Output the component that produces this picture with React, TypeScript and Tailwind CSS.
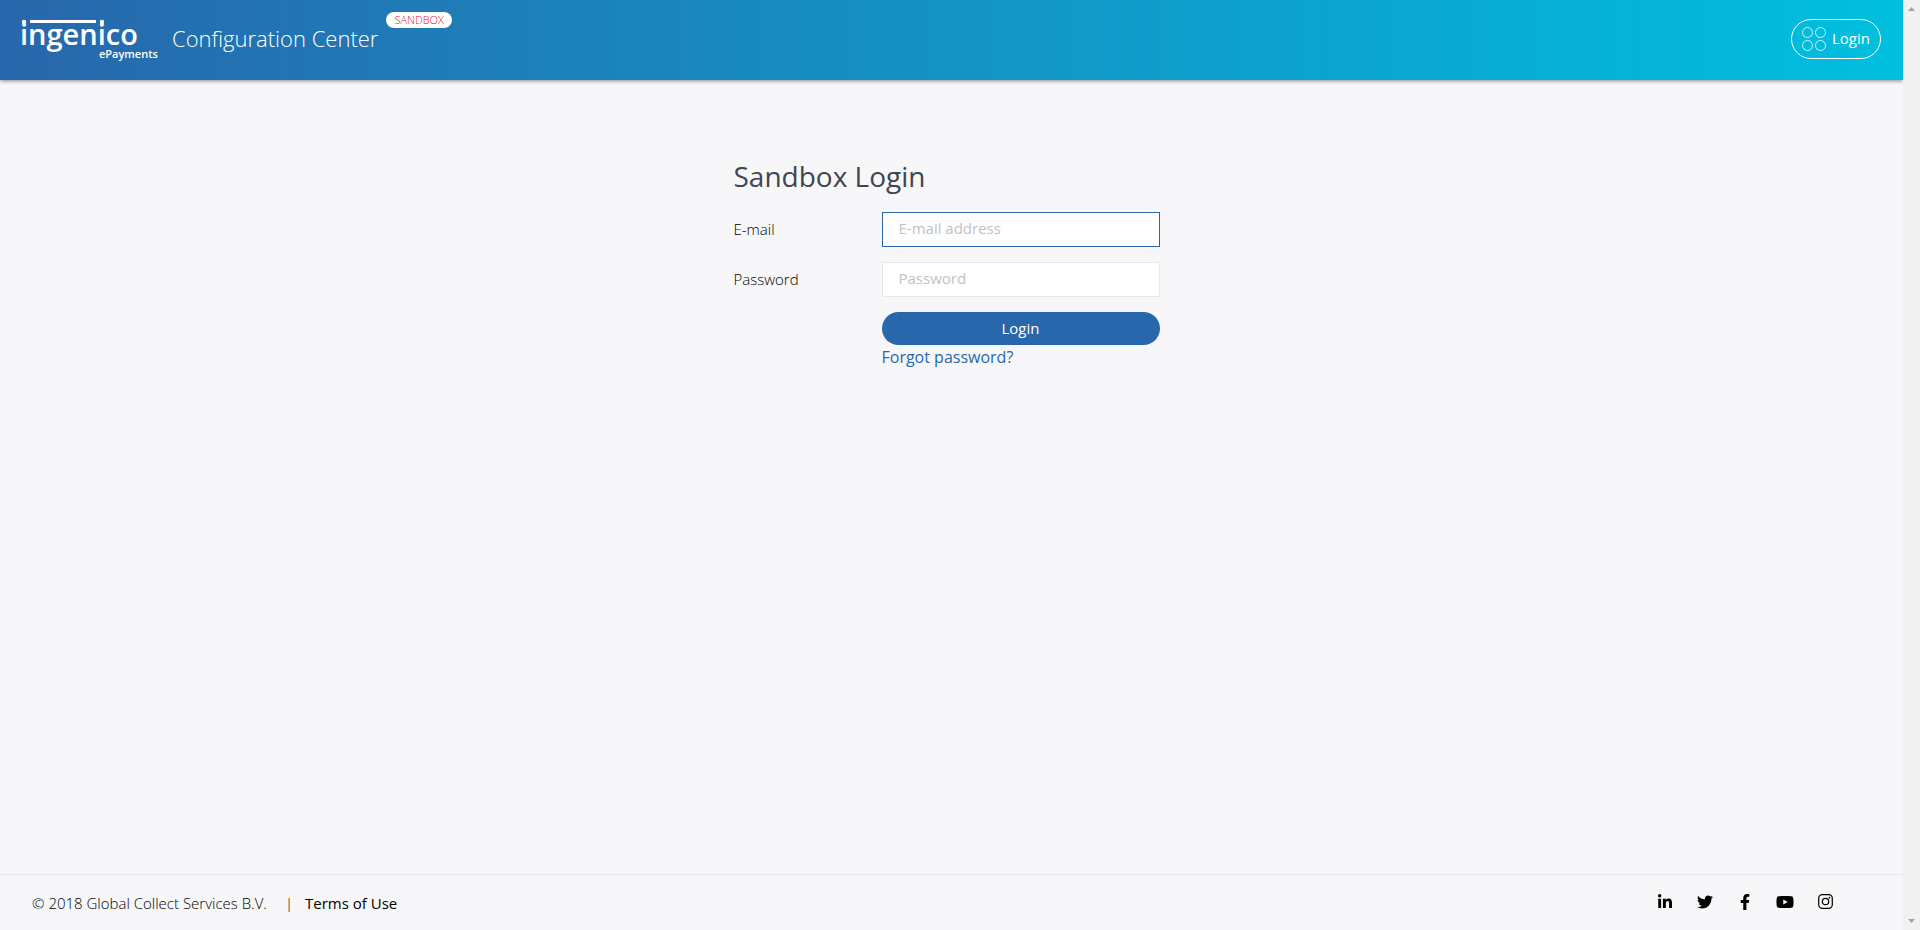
import React from "react";
import { FaFacebookF, FaLinkedinIn, FaTwitter, FaYoutube } from "react-icons/fa";

function Logo() {
  return (
    <svg className="h-16 w-36 text-white" viewBox="0 0 144 64" fill="currentColor" role="img" aria-label="ingenico ePayments">
      <rect x="10" y="12" width="66" height="3" />
      <text x="0" y="37" className="font-['Open_Sans',sans-serif] text-[29px] font-semibold">ingenico</text>
      <text x="79" y="50" className="font-['Open_Sans',sans-serif] text-[11px] font-semibold">ePayments</text>
      <circle cx="4" cy="14" r="2.200" />
      <circle cx="82" cy="14" r="2.200" />
    </svg>
  );
}

function Circles() {
  return (
    <svg className="size-6" viewBox="0 0 24 24" fill="none" stroke="currentColor" strokeOpacity="0.8" aria-hidden="true">
      <circle cx="5.500" cy="5.500" r="5" />
      <circle cx="18.500" cy="5.500" r="5" />
      <circle cx="5.500" cy="18.500" r="5" />
      <circle cx="18.500" cy="18.500" r="5" />
    </svg>
  );
}

function InstagramIcon() {
  return (
    <svg className="size-[15px]" viewBox="0 0 16 16" fill="none" stroke="currentColor" strokeWidth="1.300" aria-hidden="true">
      <rect x="0.750" y="0.750" width="14.500" height="14.500" rx="3.800" />
      <circle cx="8" cy="8" r="3.400" />
      <circle cx="12.200" cy="3.800" r="1" fill="currentColor" stroke="none" />
    </svg>
  );
}

function ScrollTrack() {
  return (
    <div className="flex w-[17px] shrink-0 flex-col items-center justify-between bg-[#f1f1f1] py-[7px]" aria-hidden="true">
      <svg className="h-1 w-[7px]" viewBox="0 0 7 4" fill="#a3a3a3"><path d="M0 4 3.500 0 7 4z" /></svg>
      <svg className="h-1 w-[7px]" viewBox="0 0 7 4" fill="#a3a3a3"><path d="M0 0 3.500 4 7 0z" /></svg>
    </div>
  );
}

const socials = [
  { name: "LinkedIn", Icon: FaLinkedinIn, size: "text-base" },
  { name: "Twitter", Icon: FaTwitter, size: "text-base" },
  { name: "Facebook", Icon: FaFacebookF, size: "text-base" },
  { name: "YouTube", Icon: FaYoutube, size: "text-lg" },
  { name: "Instagram", Icon: InstagramIcon, size: "text-base" },
];

export default function App() {
  return (
    <div className="flex min-h-screen bg-[#f7f7fa] font-['Open_Sans',sans-serif] text-black">
      <div className="flex min-w-0 flex-1 flex-col">
        <header className="flex h-20 items-start justify-between bg-linear-to-r/srgb from-[#2867ab] to-[#00bfdf] pr-[22px] pl-5 text-white shadow-[0_1px_4px_rgba(0,0,0,0.45)]">
          <div className="flex items-start">
            <a href="#" className="mt-2"><Logo /></a>
            <span className="mt-6 ml-2 text-[22px] leading-7 font-light">Configuration Center</span>
            <span className="mt-3 ml-2 rounded-full bg-white px-2 text-[11px] leading-4 font-light text-[#e8112d]">SANDBOX</span>
          </div>
          <button type="button" className="mt-[19px] flex h-10 items-center gap-1.5 rounded-full border border-white px-2.5 text-[15px] font-medium">
            <Circles />
            <span className="pb-0.5">Login</span>
          </button>
        </header>

        <main className="flex-1 pt-[76px]">
          <form className="mx-auto w-[436px] text-[15px]">
            <h1 className="text-[28px] leading-10 text-[#3f464f]">Sandbox Login</h1>
            <div className="mt-4 grid grid-cols-[148px_278px] items-center gap-y-[15px]">
              <label htmlFor="email" className="font-light">E-mail</label>
              <input id="email" type="email" placeholder="E-mail address" className="h-[35px] w-full border border-[#2867ab] bg-white px-4 pb-1 outline-none placeholder:text-[#c2c1c9]" />
              <label htmlFor="password" className="font-light">Password</label>
              <input id="password" type="password" placeholder="Password" className="h-[35px] w-full border border-[#e7e7ec] bg-white px-4 pb-1 outline-none placeholder:text-[#c2c1c9]" />
              <div className="col-start-2">
                <button type="submit" className="h-[33px] w-full rounded-full bg-[#2867ab] font-medium text-white">Login</button>
                <a href="#" className="block text-base leading-6 text-[#2867ab]">Forgot password?</a>
              </div>
            </div>
          </form>
        </main>

        <footer className="flex h-14 items-center justify-between border-t border-[#e7e7ec] pr-[58px] pb-0.5 pl-8 text-[15px]">
          <p className="flex items-center pt-1">
            <span className="font-light">© 2018 Global Collect Services B.V.</span>
            <span className="mr-3 ml-[18px] font-light">|</span>
            <a href="#">Terms of Use</a>
          </p>
          <nav className="flex items-center" aria-label="Social media">
            {socials.map(({ name, Icon, size }) => (
              <a key={name} href="#" aria-label={name} className={`flex w-10 justify-center ${size}`}>
                <Icon />
              </a>
            ))}
          </nav>
        </footer>
      </div>
      <ScrollTrack />
    </div>
  );
}
